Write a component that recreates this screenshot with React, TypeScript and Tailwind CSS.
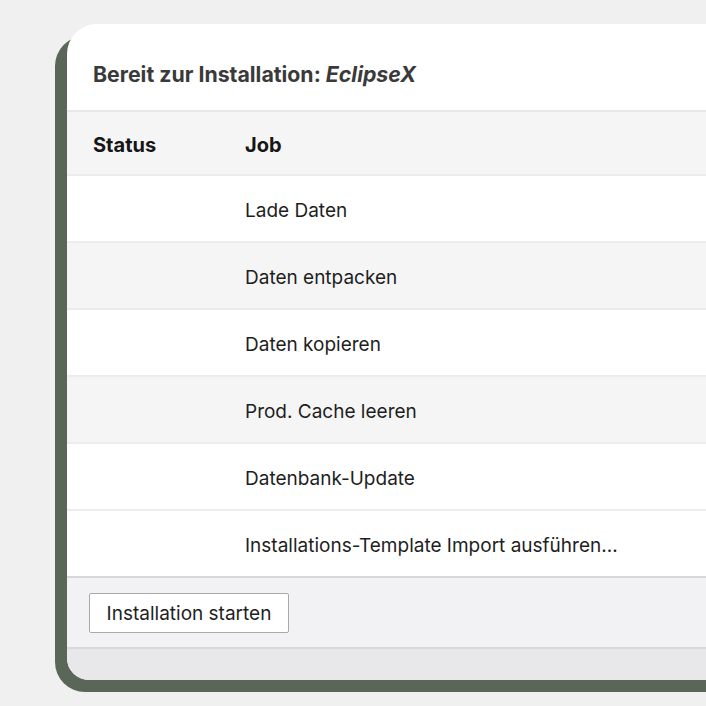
const jobs = [
  { label: "Lade Daten", shaded: false },
  { label: "Daten entpacken", shaded: true },
  { label: "Daten kopieren", shaded: false },
  { label: "Prod. Cache leeren", shaded: true },
  { label: "Datenbank-Update", shaded: false },
  { label: "Installations-Template Import ausführen...", shaded: false },
];

export default function App() {
  return (
    <div
      className="h-[706px] w-[706px] overflow-hidden bg-[#f0f0f0]"
      style={{ fontFamily: "Inter, 'Noto Sans', sans-serif" }}
    >
      <div className="ml-[55px] mt-[36px] flex h-[656px] w-[720px] flex-col rounded-[30px] bg-[#5a6657] pb-3 pl-3">
        <div className="-mt-3 flex h-[656px] shrink-0 flex-col overflow-hidden rounded-[30px] rounded-bl-[22px] bg-white">
          <div className="h-[88px] shrink-0 border-b-2 border-[#e8e8ea] pl-[26px] pt-[38px]">
            <h1 className="text-[21.3px] leading-6 font-bold text-[#3a3a3a]">
              Bereit zur Installation: <em className="italic">EclipseX</em>
            </h1>
          </div>

          <div className="flex h-[64px] shrink-0 items-center border-b-2 border-[#ececee] bg-[#f5f5f5] pt-[4px] text-[20px] font-bold text-[#161616]">
            <div className="w-[178px] pl-[26px]">Status</div>
            <div>Job</div>
          </div>

          {jobs.map((job, i) => (
            <div
              key={job.label}
              className={`flex h-[67px] shrink-0 items-center pt-[5px] text-[19px] text-[#1e1e1e] ${
                job.shaded ? "bg-[#f5f5f5]" : "bg-white"
              } ${i < jobs.length - 1 ? "border-b-2 border-[#ececee]" : "border-b-2 border-[#d6d6d8]"}`}
            >
              <div className="w-[178px]" />
              <div>{job.label}</div>
            </div>
          ))}

          <div className="flex h-[71px] shrink-0 items-center border-b-2 border-[#d9d9db] bg-[#f2f2f4] pl-[22px]">
            <button className="h-[40px] w-[200px] rounded-[2px] border border-[#a9a9ab] bg-white pt-[4px] text-[19px] text-[#1e1e1e]">
              Installation starten
            </button>
          </div>

          <div className="flex-1 bg-[#e8e8ea]" />
        </div>
      </div>
    </div>
  );
}
